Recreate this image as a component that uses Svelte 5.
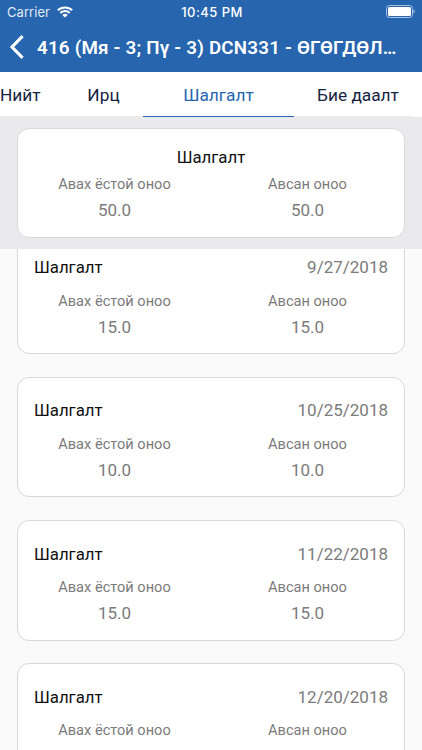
<script lang="ts">
  interface Exam {
    date: string;
    max: string;
    score: string;
  }

  const tabs = ["Нийт", "Ирц", "Шалгалт", "Бие даалт"];
  let active = $state(2);

  const exams: Exam[] = [
    { date: "9/27/2018", max: "15.0", score: "15.0" },
    { date: "10/25/2018", max: "10.0", score: "10.0" },
    { date: "11/22/2018", max: "15.0", score: "15.0" },
    { date: "12/20/2018", max: "15.0", score: "15.0" },
  ];
</script>

{#snippet scores(max: string, score: string)}
  <div class="scores">
    <div class="score">
      <span class="label">Авах ёстой оноо</span>
      <span class="value">{max}</span>
    </div>
    <div class="score">
      <span class="label">Авсан оноо</span>
      <span class="value">{score}</span>
    </div>
  </div>
{/snippet}

<div class="screen">
  <header>
    <div class="status">
      <div class="carrier">
        <span>Carrier</span>
        <svg width="16" height="12" viewBox="0 0 16 12">
          <path d="M.8 4.3a10.4 10.4 0 0 1 14.4 0M3.3 7a6.7 6.7 0 0 1 9.4 0" fill="none" stroke="#fff" stroke-width="2" />
          <path d="M8 11.6 5.3 9a3.8 3.8 0 0 1 5.4 0z" fill="#fff" />
        </svg>
      </div>
      <span class="time">10:45 PM</span>
      <svg class="battery" width="29" height="13" viewBox="0 0 29 13">
        <rect x=".5" y=".5" width="26" height="12" rx="3" fill="none" stroke="#a9c2e0" />
        <rect x="2" y="2" width="23" height="9" rx="1.5" fill="#fff" />
        <path d="M27.5 4.5q1.3 .6 1.3 2t-1.3 2z" fill="#a9c2e0" />
      </svg>
    </div>
    <div class="nav">
      <button aria-label="Back">
        <svg width="17" height="26" viewBox="0 0 17 26">
          <path d="M14.6 2.2 4 13l10.6 10.8" fill="none" stroke="#fff" stroke-width="3.1" />
        </svg>
      </button>
      <h1>416 (Мя - 3; Пү - 3) DCN331 - ӨГӨГДӨЛ…</h1>
    </div>
  </header>

  <nav class="tabs">
    {#each tabs as tab, i}
      <button class:active={i === active} onclick={() => (active = i)}>{tab}</button>
    {/each}
  </nav>

  <section class="summary">
    <div class="card">
      <div class="total">Шалгалт</div>
      {@render scores("50.0", "50.0")}
    </div>
  </section>

  <main>
    <div class="list">
      {#each exams as exam}
        <div class="card">
          <div class="card-header">
            <span class="name">Шалгалт</span>
            <span class="date">{exam.date}</span>
          </div>
          {@render scores(exam.max, exam.score)}
        </div>
      {/each}
    </div>
  </main>
</div>

<style>
  :global(body) {
    margin: 0;
    overflow: hidden;
  }

  .screen {
    display: flex;
    flex-direction: column;
    width: 422px;
    height: 750px;
    overflow: hidden;
    background: #fafafa;
    font-family: Roboto, "Noto Sans", sans-serif;
  }

  button {
    padding: 0;
    border: 0;
    background: none;
    font: inherit;
  }

  header {
    flex: none;
    height: 72px;
    background: #2765ae;
    color: #fff;
  }

  .status {
    display: grid;
    grid-template-columns: 1fr auto 1fr;
    align-items: center;
    height: 23px;
    padding: 0 7px;
    font-family: Inter, sans-serif;
    font-size: 13px;
  }

  .carrier {
    display: flex;
    align-items: center;
    gap: 7px;
    color: #e0eaf5;
    letter-spacing: 0.05px;
  }

  .time {
    padding-left: 2px;
    font-weight: 500;
    letter-spacing: 0.45px;
  }

  .battery {
    justify-self: end;
  }

  .nav {
    display: flex;
    align-items: center;
    height: 48px;
    padding-left: 8px;
  }

  .nav button {
    display: flex;
    width: 29px;
  }

  h1 {
    margin: 0;
    padding-top: 1px;
    font-size: 18.8px;
    font-weight: 600;
    letter-spacing: 0.2px;
    white-space: nowrap;
  }

  .tabs {
    flex: none;
    display: grid;
    grid-template-columns: 64px 79px 151px 128px;
    height: 45px;
    background: linear-gradient(#eaeaec, #eaeaec) left bottom / 413px 1px no-repeat #fff;
  }

  .tabs button {
    padding-top: 1px;
    border-bottom: 1px solid transparent;
    color: #15233f;
    font-size: 17.3px;
    font-weight: 450;
    white-space: nowrap;
  }

  .tabs button:first-child {
    text-align: left;
  }

  .tabs .active {
    border-color: #2765ae;
    color: #2765ae;
  }

  .summary {
    flex: none;
    box-sizing: border-box;
    height: 132px;
    padding: 11px 17px 0;
    background: #eaeaec;
  }

  .card {
    flex: none;
    box-sizing: border-box;
    height: 120.4px;
    border: 1px solid #d9d9db;
    border-radius: 12px;
    background: #fff;
  }

  .summary .card {
    height: 110px;
    padding-top: 18px;
  }

  .total {
    height: 20px;
    line-height: 20px;
    color: #111;
    font-size: 16.8px;
    font-weight: 450;
    text-align: center;
  }

  .card-header {
    display: flex;
    justify-content: space-between;
    padding: 22.6px 16px 0;
    font-size: 17px;
    line-height: 20px;
  }

  .name {
    color: #111;
    font-size: 16.8px;
    font-weight: 450;
  }

  .date,
  .score {
    color: #7b7b7b;
  }

  .scores {
    display: grid;
    grid-template-columns: 1fr 1fr;
    padding-top: 7px;
  }

  .card-header + .scores {
    padding-top: 13.4px;
  }

  .score {
    display: flex;
    flex-direction: column;
    align-items: center;
    gap: 6px;
  }

  .label {
    font-size: 14.6px;
    line-height: 20px;
  }

  .value {
    font-size: 17px;
    line-height: 20px;
  }

  main {
    flex: 1;
    min-height: 0;
    overflow: hidden;
  }

  .list {
    display: flex;
    flex-direction: column;
    gap: 22.9px;
    margin-top: -15.4px;
    padding: 0 17px;
  }
</style>
